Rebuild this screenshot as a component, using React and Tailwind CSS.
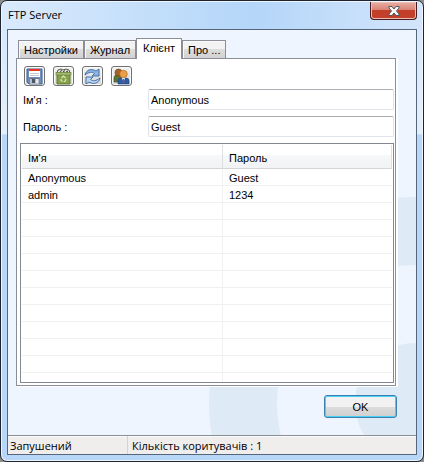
import React from "react";

const rows = [
  ["Anonymous", "Guest"],
  ["admin", "1234"],
  ...Array.from({ length: 11 }, () => ["", ""]),
];

function SaveIcon() {
  return (
    <svg viewBox="0 0 17 17" className="size-[17px]" aria-hidden="true">
      <path d="M1 1H16V16H3L1 14Z" fill="#6d8fc0" stroke="#45659a" />
      <rect x="3" y="1" width="11" height="8" fill="#fff" />
      <rect x="3" y="1" width="11" height="2" fill="#f0341c" />
      <path d="M4 5.5H13M4 7.5H13" stroke="#c4c9d4" />
      <rect x="4" y="10" width="9" height="6" fill="#b9bec6" />
      <rect x="4" y="10" width="9" height="1" fill="#6b7482" />
      <rect x="6" y="11" width="3" height="4" fill="#4c5564" />
      <rect x="10" y="11" width="2" height="4" fill="#e6e8ec" />
    </svg>
  );
}

function BinIcon() {
  return (
    <svg viewBox="0 0 17 17" className="size-[17px]" aria-hidden="true">
      <path d="M2 5L3 2L6 1L8 2L11 1L14 2L15 5Z" fill="#e4e4df" stroke="#55584f" />
      <path d="M5 3.5L7 2.5M8 4L10 2.5M11 4L13 3" stroke="#33362f" />
      <path d="M2 6H15V16H2Z" fill="#86a04c" stroke="#5f7a35" />
      <rect x="1" y="4.5" width="15" height="2.5" fill="#a4b96c" stroke="#66803a" strokeWidth=".6" />
      <path d="M6.5 10L8.5 8L10.5 10M11 11L10 13.5H8.7M7.5 13.5L6 12.5V11" fill="none" stroke="#dcebb8" strokeWidth="1.1" />
    </svg>
  );
}

function RefreshIcon() {
  return (
    <svg viewBox="0 0 17 17" className="size-[17px]" aria-hidden="true">
      <path d="M1 7C2 2 7 0 12 3L15 1V8H8L10.5 5.500C8 3.500 5 4 1 7Z" fill="#8db4e2" stroke="#35689f" strokeWidth=".9" />
      <path d="M16 10C15 15 10 17 5 14L2 16V9H9L6.500 11.500C9 13.500 12 13 16 10Z" fill="#bcd5f0" stroke="#35689f" strokeWidth=".9" />
    </svg>
  );
}

function UsersIcon() {
  return (
    <svg viewBox="0 0 17 17" className="size-[17px]" aria-hidden="true">
      <path d="M1 14V10Q1 7 4 7H8V14Z" fill="#5e7434" stroke="#3f5222" strokeWidth=".6" />
      <circle cx="5.500" cy="4.500" r="3.500" fill="#a5622a" stroke="#6d3b12" strokeWidth=".6" />
      <path d="M5 16V13Q5 10 8 10H13Q16 10 16 13V16Z" fill="#2c5ca6" stroke="#1c3f7c" strokeWidth=".6" />
      <path d="M9 10L10.500 14L12 10Z" fill="#fff" />
      <path d="M10 11H11L11.300 15H9.700Z" fill="#d03a22" />
      <circle cx="10.500" cy="6" r="3.800" fill="#e9a04a" stroke="#b26a18" strokeWidth=".6" />
    </svg>
  );
}

const tools = [
  ["Зберегти", SaveIcon],
  ["Видалити", BinIcon],
  ["Оновити", RefreshIcon],
  ["Користувачі", UsersIcon],
];

function Tab({ children, active }) {
  return (
    <button
      type="button"
      role="tab"
      aria-selected={!!active}
      className={
        active
          ? "relative -mb-px h-[21px] border border-b-0 border-[#8b8e97] bg-white px-[6px] pb-[3px]"
          : "h-[18px] border border-b-0 border-[#8b8e97] bg-linear-to-b from-[#f2f2f2] from-50% via-[#dddddd] via-50% to-[#d2d2d2] px-[5px] shadow-[inset_1px_1px_0_#fafafa]"
      }
    >
      {children}
    </button>
  );
}

function Field({ id, label, value }) {
  return (
    <div className="flex items-center">
      <label htmlFor={id} className="w-[125px] shrink-0">{label}</label>
      <input
        id={id}
        defaultValue={value}
        className="h-[21px] min-w-0 flex-1 rounded-[2px] border border-[#e2e3ea] border-t-[#abadb3] bg-white px-[2px] outline-none"
      />
    </div>
  );
}

export default function App() {
  return (
    <div className="h-screen min-h-[300px] bg-[#8c8c8c] font-['Liberation_Sans',Arial,sans-serif] text-[11px] leading-[14px] text-black">
      <div className="flex h-full flex-col overflow-hidden rounded-[7px] border border-[#1f2530] bg-linear-to-b from-[#d3e6fb] from-0% via-[#e4effc] via-[133px] to-[#b7d6f8] to-[134px] px-[6px] pb-[6px] shadow-[inset_0_0_0_1px_#edf6ff]">
        <header className="-mx-[5px] mt-px flex h-[27px] shrink-0 items-start justify-between rounded-t-[5px] bg-linear-to-r from-[#d9eafc] via-[#b4d6f9] via-60% to-[#d3e5fb] pr-[5px] pl-[6px]">
          <h1 className="pt-[5px] font-['Open_Sans','Noto_Sans',sans-serif] text-[11px] leading-[16px]">FTP Server</h1>
          <button
            type="button"
            aria-label="Закрити"
            className="flex h-[18px] w-[47px] items-center justify-center rounded-b-[4px] border border-t-0 border-[#431d22] bg-linear-to-b from-[#e8b0a6] via-[#d98476] via-45% to-[#c2402a] to-50% shadow-[inset_0_0_0_1px_#f0bdb2]"
          >
            <svg viewBox="0 0 12 10" className="h-[10px] w-[12px]" aria-hidden="true">
              <path d="M1 .5H4L6 3L8 .5H11V2L8.500 5L11 8V9.500H8L6 7L4 9.500H1V8L3.500 5L1 2Z" fill="#f5f5f5" stroke="#50545f" />
            </svg>
          </button>
        </header>

        <main className="relative isolate flex min-h-0 flex-1 flex-col overflow-hidden border border-[#56667a] bg-[#eef5fe]">
          <svg viewBox="0 0 210 240" className="absolute right-0 bottom-[18px] -z-10 h-[240px] w-[210px]" aria-hidden="true">
            <circle cx="209" cy="207" r="206" fill="#deeaf6" />
            <circle cx="209" cy="207" r="138" fill="#eef5fe" />
            <circle cx="209" cy="207" r="60" fill="#deeaf6" />
          </svg>

          <div className="flex min-h-0 flex-1 flex-col pt-[8px] pr-[18px] pb-[17px] pl-[8px]">
            <div role="tablist" className="flex items-end pl-[2px]">
              <Tab>Настройки</Tab>
              <Tab>Журнал</Tab>
              <Tab active>Клієнт</Tab>
              <Tab>Про ...</Tab>
            </div>

            <section className="flex min-h-0 flex-1 flex-col border-r-2 border-b border-white">
              <div className="flex min-h-0 flex-1 flex-col border border-[#8b8e97] bg-white pt-[7px] pr-px pb-[2px] pl-[3px]">
                <div className="flex gap-[8px] pl-[4px]">
                  {tools.map(([name, Icon]) => (
                    <button
                      key={name}
                      type="button"
                      aria-label={name}
                      className="flex h-[20px] w-[21px] items-center justify-center rounded-[3px] border border-[#707070] bg-linear-to-b from-[#f4f4f4] to-[#d4d4d4] shadow-[inset_0_0_0_1px_#fafafa]"
                    >
                      <Icon />
                    </button>
                  ))}
                </div>

                <div className="mt-[3px] flex flex-col gap-[6px] pl-[3px]">
                  <Field id="user" label="Ім'я :" value="Anonymous" />
                  <Field id="pass" label="Пароль :" value="Guest" />
                </div>

                <div className="mt-[6px] min-h-0 flex-1 overflow-hidden border border-[#828790] bg-white p-px">
                  <table className="w-full table-fixed border-separate border-spacing-0 text-left">
                    <colgroup>
                      <col className="w-[201px]" />
                      <col />
                    </colgroup>
                    <thead>
                      <tr className="h-[24px] bg-linear-to-b from-white from-40% via-[#f7f8fa] via-40% to-[#f1f2f4]">
                        <th className="border-r border-b border-[#d5d5d5] border-r-[#dfe0e2] px-[6px] py-0 pt-[2px] font-normal">Ім'я</th>
                        <th className="border-r border-b border-[#d5d5d5] border-r-[#dfe0e2] px-[6px] py-0 pt-[2px] font-normal">Пароль</th>
                      </tr>
                    </thead>
                    <tbody>
                      {rows.map(([name, pass], i) => (
                        <tr key={i} className="h-[17px]">
                          <td className="border-r border-b border-[#f0f0f0] px-[6px] pt-[2px] pb-0">{name}</td>
                          <td className="border-b border-[#f0f0f0] px-[6px] pt-[2px] pb-0">{pass}</td>
                        </tr>
                      ))}
                    </tbody>
                  </table>
                </div>
              </div>
            </section>

            <button
              type="button"
              className="mt-[8px] mr-px h-[23px] w-[73px] shrink-0 self-end rounded-[3px] border border-[#3c7fb1] bg-linear-to-b from-[#f2f2f2] from-50% via-[#dddddd] via-50% to-[#cfcfcf] shadow-[inset_0_0_0_1px_#48d0f4]"
            >
              OK
            </button>
          </div>

          <footer className="flex h-[19px] shrink-0 items-stretch border-t border-[#8b9097] bg-[#f0eded] font-['Open_Sans','Noto_Sans',sans-serif] text-[11px] leading-[20px] shadow-[inset_0_1px_0_#fbfbfb]">
            <div className="w-[120px] border-r border-[#d5d3d3] pl-[2px]">Запушений</div>
            <div className="flex-1 pl-[4px]">Кількість коритувачів : 1</div>
          </footer>
        </main>
      </div>
    </div>
  );
}
